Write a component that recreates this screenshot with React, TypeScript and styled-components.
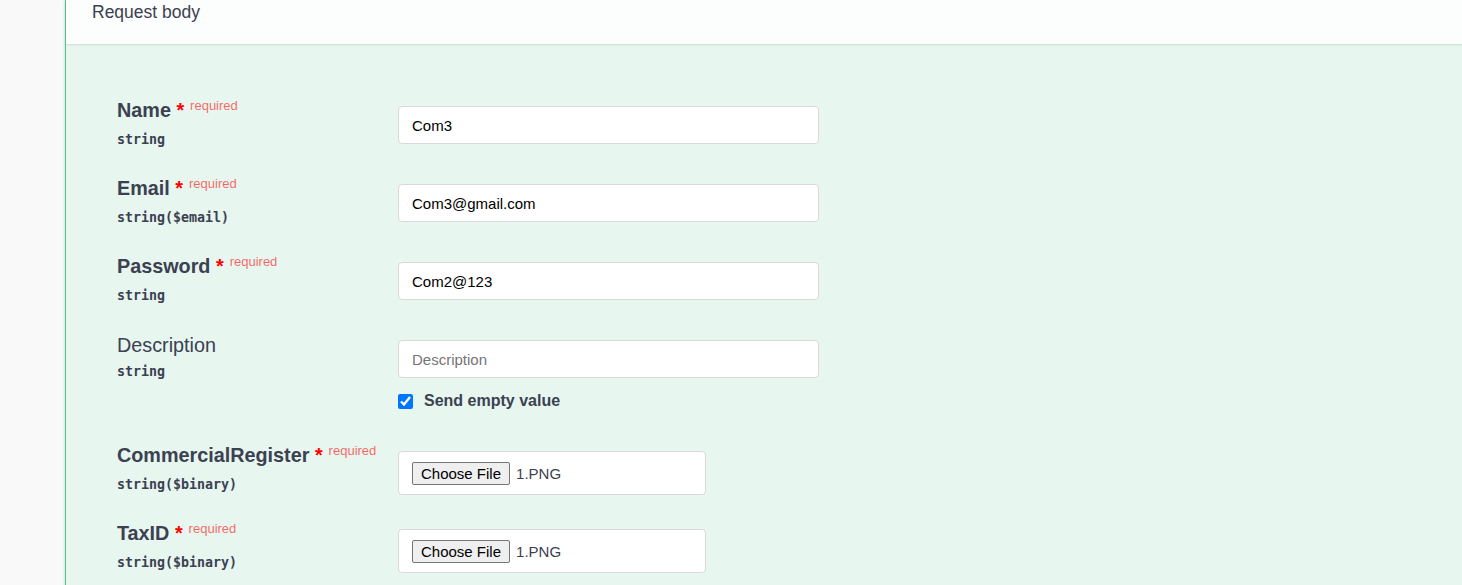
import React from "react";
import styled, { createGlobalStyle } from "styled-components";

const GlobalStyle = createGlobalStyle`
  html, body { margin: 0; padding: 0; background: #f9f9f9; }
  body { font-family: "Liberation Sans", Arial, sans-serif; overflow: hidden; }
  * { box-sizing: border-box; }
`;

const Page = styled.div`
  width: 1462px;
  height: 585px;
  padding-left: 65px;
  overflow: hidden;
  background: #f9f9f9;
`;

const OpBlock = styled.section`
  width: 1420px;
  height: 600px;
  border-left: 1px solid #49cc90;
  background: #e7f6ef;
  box-shadow: 0 0 3px rgba(0, 0, 0, 0.19);
`;

const SectionHeader = styled.header`
  height: 44px;
  padding-left: 26px;
  background: #fcfdfd;
  box-shadow: 0 1px 2px rgba(0, 0, 0, 0.1);
  display: flex;
  align-items: flex-start;
`;

const HeaderTitle = styled.h4`
  margin: 0;
  font-size: 17.5px;
  font-weight: 400;
  line-height: 25px;
  color: #3b4151;
`;

const Form = styled.div`
  padding: 54px 0 0 51px;
`;

const Row = styled.div<{ $h?: number }>`
  display: grid;
  grid-template-columns: 281px 421px;
  height: ${(p) => p.$h ?? 78}px;
`;

const LabelCell = styled.div<{ $shift?: number }>`
  display: flex;
  flex-direction: column;
  padding-top: ${(p) => p.$shift ?? 0}px;
`;

const ParamName = styled.div<{ $required?: boolean }>`
  font-size: 19.8px;
  line-height: 24px;
  font-weight: ${(p) => (p.$required ? 700 : 400)};
  color: #3b4151;
  white-space: nowrap;
`;

const Star = styled.span`
  color: red;
`;

const RequiredTag = styled.span`
  position: relative;
  top: -7.5px;
  padding: 0 6px;
  font-size: 13px;
  font-weight: 400;
  color: rgba(255, 0, 0, 0.6);
`;

const ParamType = styled.div`
  margin-top: 7px;
  font-family: "DejaVu Sans Mono", "Liberation Mono", monospace;
  font-size: 13.3px;
  font-weight: 700;
  line-height: 16px;
  color: #3b4151;
`;

const InputCell = styled.div`
  padding-top: 8px;
  display: flex;
  flex-direction: column;
  align-items: flex-start;
`;

const TextInput = styled.input`
  width: 421px;
  height: 38px;
  margin: 0;
  padding: 0 13px;
  border: 1px solid #d9d9d9;
  border-radius: 4px;
  background: #fff;
  font-family: "Liberation Sans", Arial, sans-serif;
  font-size: 15px;
  color: #000;
  outline: none;
  &::placeholder { color: #757575; }
`;

const CheckRow = styled.label`
  margin-top: 13px;
  height: 20px;
  display: flex;
  align-items: center;
  gap: 11px;
  font-size: 16px;
  font-weight: 700;
  color: #3b4151;
`;

const Check = styled.input`
  width: 15px;
  height: 15px;
  margin: 0;
  accent-color: #0075ff;
`;

const FileBox = styled.div`
  width: 308px;
  height: 44px;
  padding: 0 13px;
  border: 1px solid #d9d9d9;
  border-radius: 4px;
  background: #fff;
  display: flex;
  align-items: center;
  gap: 6px;
`;

const FileButton = styled.button`
  height: 23px;
  padding: 0 8px;
  border: 1px solid #767676;
  border-radius: 2px;
  background: #efefef;
  font-family: "Liberation Sans", Arial, sans-serif;
  font-size: 15px;
  color: #000;
  line-height: 21px;
`;

const FileName = styled.span`
  font-size: 15px;
  color: #3b4151;
`;

type Field = {
  name: string;
  type: string;
  required?: boolean;
  kind: "text" | "file" | "desc";
  value?: string;
};

const fields: Field[] = [
  { name: "Name", type: "string", required: true, kind: "text", value: "Com3" },
  { name: "Email", type: "string($email)", required: true, kind: "text", value: "Com3@gmail.com" },
  { name: "Password", type: "string", required: true, kind: "text", value: "Com2@123" },
  { name: "Description", type: "string", kind: "desc" },
  { name: "CommercialRegister", type: "string($binary)", required: true, kind: "file" },
  { name: "TaxID", type: "string($binary)", required: true, kind: "file" },
];

export default function App() {
  return (
    <>
      <GlobalStyle />
      <Page>
        <OpBlock>
          <SectionHeader>
            <HeaderTitle>Request body</HeaderTitle>
          </SectionHeader>
          <Form>
            {fields.map((f) => (
              <Row key={f.name} $h={f.kind === "desc" ? 111 : 78}>
                <LabelCell $shift={f.kind === "desc" ? 1 : 0}>
                  <ParamName $required={f.required}>
                    {f.name}
                    {f.required && (
                      <>
                        <Star>&nbsp;*</Star>
                        <RequiredTag>required</RequiredTag>
                      </>
                    )}
                  </ParamName>
                  <ParamType>{f.type}</ParamType>
                </LabelCell>
                <InputCell>
                  {f.kind === "text" && <TextInput defaultValue={f.value} />}
                  {f.kind === "desc" && (
                    <>
                      <TextInput placeholder="Description" />
                      <CheckRow>
                        <Check type="checkbox" defaultChecked />
                        Send empty value
                      </CheckRow>
                    </>
                  )}
                  {f.kind === "file" && (
                    <FileBox>
                      <FileButton type="button">Choose File</FileButton>
                      <FileName>1.PNG</FileName>
                    </FileBox>
                  )}
                </InputCell>
              </Row>
            ))}
          </Form>
        </OpBlock>
      </Page>
    </>
  );
}
